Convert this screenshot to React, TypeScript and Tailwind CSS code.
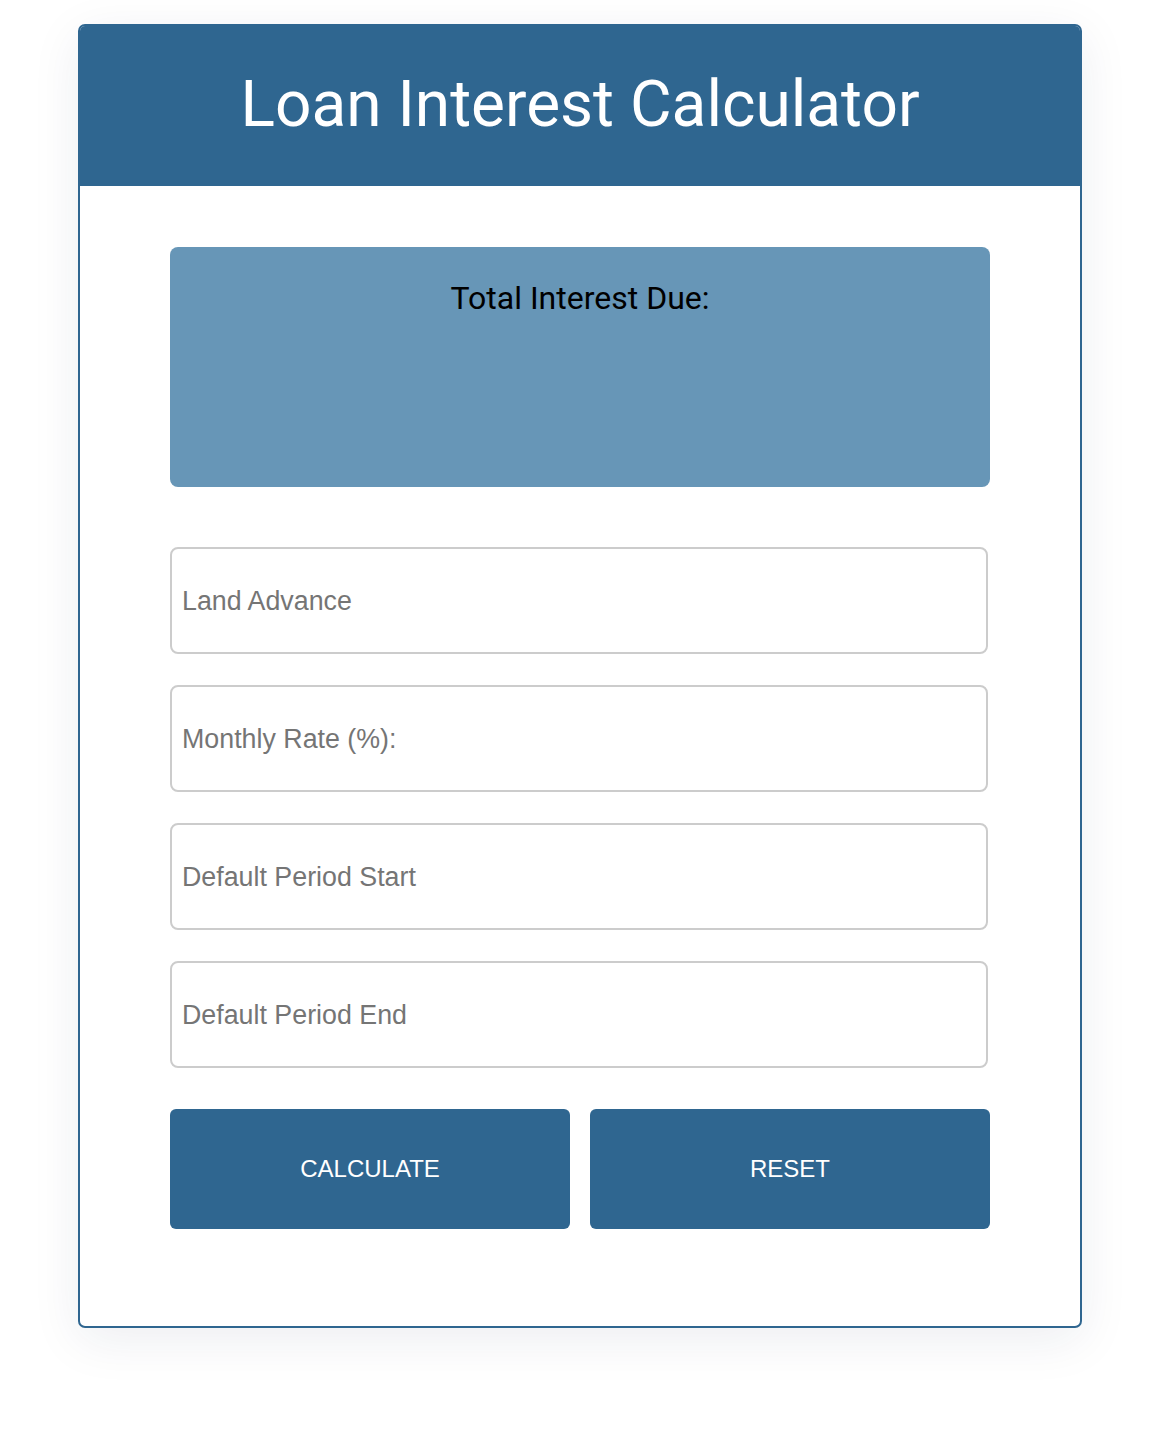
import React from "react";

export default function App() {
  const fields = ["Land Advance", "Monthly Rate (%):", "Default Period Start", "Default Period End"];
  return (
    <div className="min-h-[1454px] w-full bg-white pt-[24px]">
      <div className="ml-[78px] w-[1004px] overflow-hidden rounded-[7px] border-2 border-[#2f6690] bg-white shadow-[0_12px_50px_rgba(30,40,80,0.08)]">
        <div className="-mx-[2px] -mt-[2px] flex h-[162px] items-center justify-center bg-[#2f6690] pb-[1px]">
          <h1 className="text-[64px] font-normal leading-normal text-white [font-family:Roboto,sans-serif]">
            Loan Interest Calculator
          </h1>
        </div>
        <div className="px-[90px] pb-[97px] pt-[61px]">
          <div className="h-[240px] w-[820px] rounded-[8px] bg-[#6796b7] pt-[27px] text-center">
            <h2 className="text-[32px] font-normal leading-normal text-black [font-family:Roboto,sans-serif]">
              Total Interest Due:
            </h2>
          </div>
          <div className="mt-[60px] flex flex-col gap-[31px]">
            {fields.map((f) => (
              <input
                key={f}
                type="text"
                placeholder={f}
                className="h-[107px] w-[818px] rounded-[8px] border-2 border-[#cccccc] bg-white pl-[10px] pt-[1px] text-[26.8px] text-black outline-none placeholder:text-[#757575] [font-family:'Liberation_Sans',Arial,sans-serif]"
              />
            ))}
          </div>
          <div className="mt-[41px] flex w-[820px] gap-[20px]">
            <button className="h-[120px] flex-1 rounded-[6px] bg-[#2f6690] text-[24px] uppercase text-white [font-family:'Liberation_Sans',Arial,sans-serif]">
              Calculate
            </button>
            <button className="h-[120px] flex-1 rounded-[6px] bg-[#2f6690] text-[24px] uppercase text-white [font-family:'Liberation_Sans',Arial,sans-serif]">
              Reset
            </button>
          </div>
        </div>
      </div>
    </div>
  );
}
